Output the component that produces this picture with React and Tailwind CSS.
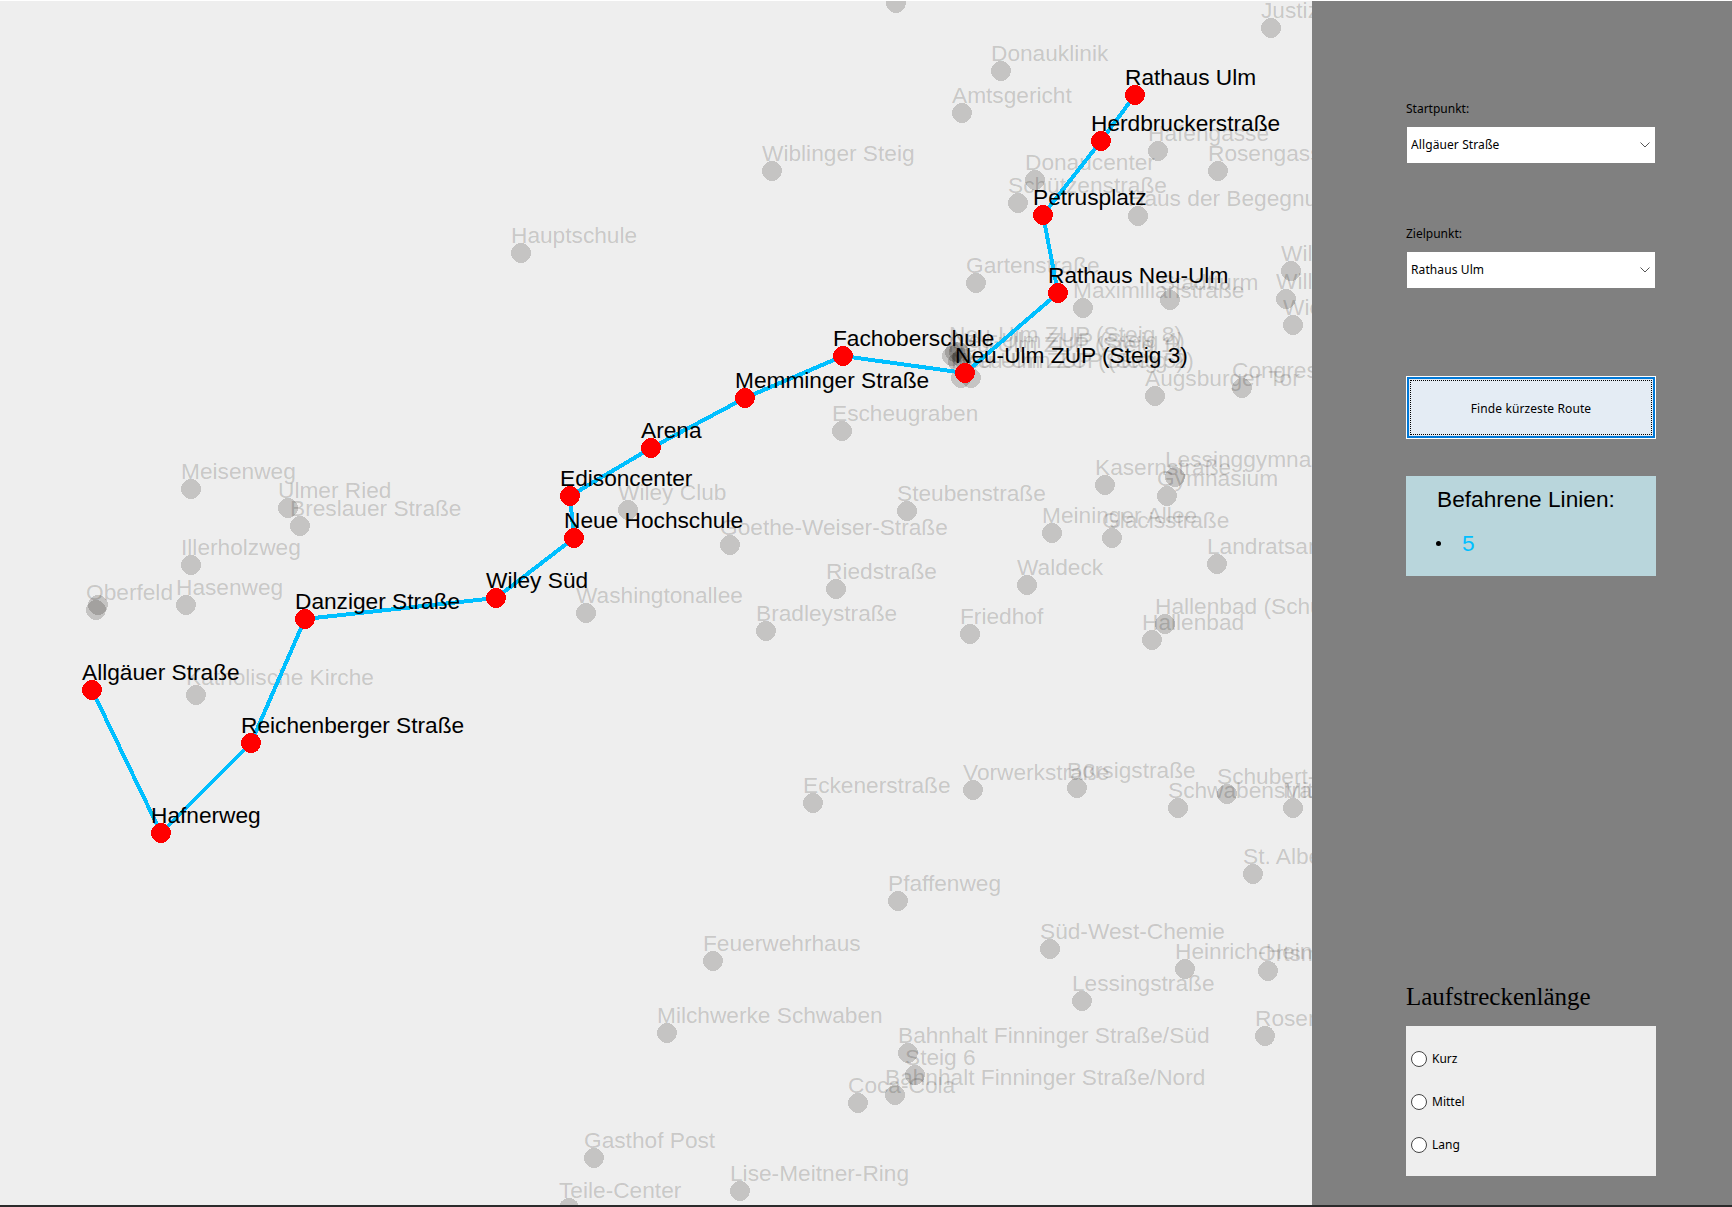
import React from 'react';

// grey stops: [x, y, name]
const stops = [
    [896, 3, ''],
    [1271, 28, 'Justizgebäude'],
    [1001, 71, 'Donauklinik'],
    [962, 113, 'Amtsgericht'],
    [1158, 151, 'Hafengasse'],
    [1218, 171, 'Rosengasse'],
    [772, 171, 'Wiblinger Steig'],
    [1035, 180, 'Donaucenter'],
    [1018, 203, 'Schützenstraße'],
    [1138, 216, 'Haus der Begegnung'],
    [521, 253, 'Hauptschule'],
    [976, 283, 'Gartenstraße'],
    [1291, 271, 'Wilhelmstraße'],
    [1286, 299, 'Willy-Brandt-Platz'],
    [1293, 325, 'Wielandstraße'],
    [1083, 308, 'Maximilianstraße'],
    [1170, 300, 'Stadtturm'],
    [959, 352, 'Neu-Ulm ZUP (Steig 8)'],
    [962, 358, 'Neu-Ulm ZUP (Steig 4)'],
    [958, 362, 'Neu-Ulm ZUP (Steig 1)'],
    [952, 356, ''],
    [955, 352, ''],
    [961, 378, 'Neu-Ulm ZUP (Steig 5)'],
    [971, 378, 'Neu-Ulm ZUP (Steig 2)'],
    [1155, 396, 'Augsburger Tor'],
    [1242, 388, 'Congress Centrum'],
    [842, 431, 'Escheugraben'],
    [1105, 485, 'Kasernstraße'],
    [1175, 477, 'Lessinggymnasium'],
    [1167, 496, 'Gymnasium'],
    [1052, 533, 'Meininger Allee'],
    [1112, 538, 'Glacisstraße'],
    [1217, 564, 'Landratsamt'],
    [907, 511, 'Steubenstraße'],
    [730, 545, 'Goethe-Weiser-Straße'],
    [836, 589, 'Riedstraße'],
    [1027, 585, 'Waldeck'],
    [970, 634, 'Friedhof'],
    [1165, 624, 'Hallenbad (Schule)'],
    [1152, 640, 'Hallenbad'],
    [766, 631, 'Bradleystraße'],
    [586, 613, 'Washingtonallee'],
    [628, 510, 'Wiley Club'],
    [191, 489, 'Meisenweg'],
    [288, 508, 'Ulmer Ried'],
    [300, 526, 'Breslauer Straße'],
    [191, 565, 'Illerholzweg'],
    [186, 605, 'Hasenweg'],
    [96, 610, 'Oberfeld'],
    [98, 605, ''],
    [196, 695, 'Katholische Kirche'],
    [813, 803, 'Eckenerstraße'],
    [973, 790, 'Vorwerkstraße'],
    [1077, 788, 'Borsigstraße'],
    [1178, 808, 'Schwabenstraße'],
    [1227, 794, 'Schubert-Straße'],
    [1293, 808, 'Mittelweg'],
    [1253, 874, 'St. Albert'],
    [898, 901, 'Pfaffenweg'],
    [1050, 949, 'Süd-West-Chemie'],
    [1185, 969, 'Heinrich-Heine-Schule'],
    [1268, 971, 'Ortsmitte'],
    [1082, 1001, 'Lessingstraße'],
    [1265, 1036, 'Rosengarten'],
    [713, 961, 'Feuerwehrhaus'],
    [667, 1033, 'Milchwerke Schwaben'],
    [908, 1053, 'Bahnhalt Finninger Straße/Süd'],
    [915, 1075, 'Steig 6'],
    [895, 1095, 'Bahnhalt Finninger Straße/Nord'],
    [858, 1103, 'Coca-Cola'],
    [594, 1158, 'Gasthof Post'],
    [740, 1191, 'Lise-Meitner-Ring'],
    [569, 1208, 'Teile-Center'],
];

// the route, in driving order
const route = [
    [92, 690, 'Allgäuer Straße'],
    [161, 833, 'Hafnerweg'],
    [251, 743, 'Reichenberger Straße'],
    [305, 619, 'Danziger Straße'],
    [496, 598, 'Wiley Süd'],
    [574, 538, 'Neue Hochschule'],
    [570, 496, 'Edisoncenter'],
    [651, 448, 'Arena'],
    [745, 398, 'Memminger Straße'],
    [843, 356, 'Fachoberschule'],
    [965, 373, 'Neu-Ulm ZUP (Steig 3)'],
    [1058, 293, 'Rathaus Neu-Ulm'],
    [1043, 215, 'Petrusplatz'],
    [1101, 141, 'Herdbruckerstraße'],
    [1135, 95, 'Rathaus Ulm'],
];

function NetworkMap() {
    return (
        <svg
            width="1312"
            height="1204"
            viewBox="0 1 1312 1204"
            className="shrink-0 font-['Liberation_Sans',sans-serif] text-[22.7px]"
        >
            <g fill="#0a0600" fillOpacity="0.18">
                {stops.map(([x, y, name]) => (
                    <g key={`${x}-${y}`}>
                        <circle cx={x} cy={y} r="10" shapeRendering="crispEdges" />
                        {name && <text x={x - 10} y={y - 10}>{name}</text>}
                    </g>
                ))}
            </g>
            <polyline
                points={route.map(([x, y]) => `${x},${y}`).join(' ')}
                fill="none"
                stroke="#00bfff"
                strokeWidth="4"
                shapeRendering="crispEdges"
            />
            {route.map(([x, y]) => (
                <circle key={`${x}-${y}`} cx={x} cy={y} r="10" fill="#ff0000" shapeRendering="crispEdges" />
            ))}
            {route.map(([x, y, name]) => (
                <text key={name} x={x - 10} y={y - 10} fill="#000000">{name}</text>
            ))}
        </svg>
    );
}

function StopSelect({ value }) {
    return (
        <div className="relative h-9">
            <select
                defaultValue={value}
                className="h-full w-full appearance-none bg-white pl-1 text-xs tracking-[0.1px] text-black outline-none"
            >
                {route.map(([, , name]) => (
                    <option key={name} value={name}>{name}</option>
                ))}
            </select>
            <svg
                width="10"
                height="6"
                viewBox="0 0 10 6"
                className="pointer-events-none absolute right-[5px] top-[15px]"
            >
                <path d="M0.5 0.5 L5 5 L9.5 0.5" fill="none" stroke="#555555" strokeWidth="1" />
            </svg>
        </div>
    );
}

function RadioRow({ label }) {
    return (
        <label className="flex h-4 items-center gap-[5px] text-xs text-black">
            <input
                type="radio"
                name="laufstrecke"
                className="h-4 w-4 appearance-none rounded-full border border-[#444444] bg-white"
            />
            {label}
        </label>
    );
}

export default function App() {
    return (
        <div className="flex h-[1207px] w-full flex-col overflow-hidden bg-[#eeeeee] font-['Noto_Sans',sans-serif]">
            <div className="h-px bg-white" />
            <div className="flex h-[1204px]">
                <NetworkMap />
                <aside className="flex w-[420px] flex-col bg-[#808080] pl-[94px] pr-[76px] pt-[100px]">
                    <div className="h-4 text-xs leading-4 text-black">Startpunkt:</div>
                    <div className="ml-px mt-[10px] w-[248px]">
                        <StopSelect value="Allgäuer Straße" />
                    </div>
                    <div className="mt-[63px] h-4 text-xs leading-4 text-black">Zielpunkt:</div>
                    <div className="ml-px mt-[10px] w-[248px]">
                        <StopSelect value="Rathaus Ulm" />
                    </div>

                    <button type="button" className="mt-[88px] h-[63px] w-full border border-white bg-[#e4ecf4] text-xs tracking-[0.1px] text-black">
                        <div className="h-full border-2 border-[#0078d7]">
                            <div className="m-px flex h-[calc(100%-2px)] items-center justify-center border border-dotted border-black pt-0.5">
                                Finde kürzeste Route
                            </div>
                        </div>
                    </button>

                    <div className="mt-[37px] h-[100px] bg-[#b9d6dc] pl-[30px] pt-[10px] font-['Liberation_Sans',sans-serif] text-[22.7px] leading-[26px]">
                        <h2 className="pl-px text-black">Befahrene Linien:</h2>
                        <ul className="mt-[18px]">
                            <li className="flex items-center gap-[21px]">
                                <span className="h-[5px] w-[5px] rounded-full bg-black" />
                                <span className="text-[#00bfff]">5</span>
                            </li>
                        </ul>
                    </div>

                    <h2 className="mt-[406px] font-['Liberation_Serif',serif] text-[25px] leading-[30px] text-black">
                        Laufstreckenlänge
                    </h2>
                    <div className="mt-[14px] flex h-[150px] flex-col gap-[27px] bg-[#eeeeee] pl-[5px] pt-[25px]">
                        <RadioRow label="Kurz" />
                        <RadioRow label="Mittel" />
                        <RadioRow label="Lang" />
                    </div>
                </aside>
            </div>
            <div className="h-0.5 bg-[#2b2b2b]" />
        </div>
    );
}
